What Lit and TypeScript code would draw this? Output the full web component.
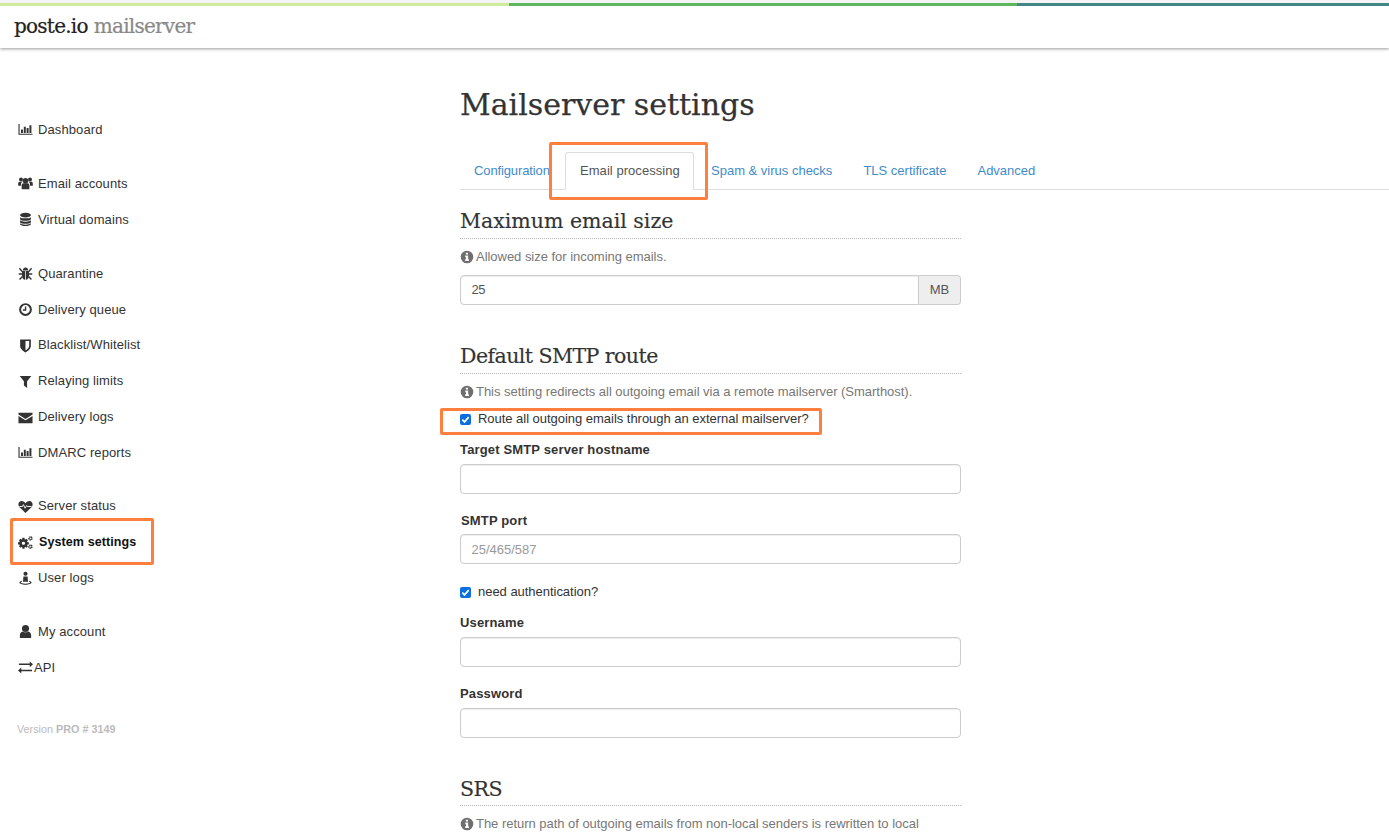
import { LitElement, html, css, svg } from "lit";
import { customElement } from "lit/decorators.js";

const I: Record<string, any> = {
  chart: svg`<path d="M.5 2h1.200v10.500H15.500v1.200H.5z"/><path d="M3.200 8h2.100v3.700H3.200zM6.200 5h2.100v6.700H6.200zM9.200 6.500h2.100v5.200H9.200zM12.200 3.500h2.100v8.200h-2.100z"/>`,
  users: svg`<circle cx="8" cy="5" r="3"/><circle cx="3.200" cy="3.800" r="2.100"/><circle cx="12.800" cy="3.800" r="2.100"/><path d="M3.900 14V9.800c0-1.100.9-2 2-2h4.200c1.100 0 2 .9 2 2V14z"/><path d="M.2 10.500V8c0-1.100.8-1.800 1.800-1.800h2.600c-.6.600-1.400 1.500-1.400 2.600v1.700zM15.800 10.500V8c0-1.100-.8-1.800-1.800-1.800h-2.600c.6.600 1.400 1.500 1.400 2.600v1.700z"/>`,
  db: svg`<ellipse cx="8" cy="3.300" rx="5.800" ry="2.500"/><path d="M2.200 5.500c1 1.700 10.600 1.700 11.600 0v2.200c-1 2.200-10.600 2.200-11.600 0zM2.200 8.800c1 2 10.600 2 11.600 0V11c-1 2.200-10.600 2.200-11.600 0zM2.200 12.100c1 2 10.600 2 11.600 0v.9c-.6 2.600-11 2.600-11.600 0z"/>`,
  bug: svg`<path d="M5.200 4.700C5.200 3 6.400 1.700 8 1.700s2.800 1.300 2.800 3z"/><path d="M4.300 5.400h3.300V14.600C5.600 14.400 4.300 12.600 4.300 10zM8.400 5.400h3.300V10c0 2.600-1.300 4.400-3.300 4.600z"/><path d="M1.500 2.500l3 3.300M14.500 2.500l-3 3.300M.8 8.500h3.700M15.200 8.500h-3.700M1.700 14.300l3-3M14.300 14.300l-3-3" stroke="currentColor" stroke-width="1.500" fill="none"/>`,
  clock: svg`<path fill-rule="evenodd" d="M8 1.200a6.800 6.800 0 1 0 0 13.600A6.800 6.800 0 0 0 8 1.200zm0 2.100a4.700 4.700 0 1 1 0 9.400 4.700 4.700 0 0 1 0-9.400z"/><path d="M7.300 4.800h1.500v4.400H5.200V7.800h2.100z"/>`,
  shield: svg`<path fill-rule="evenodd" d="M2.300 1.500h11.400v7c0 3.200-3.300 5.500-5.700 6.900-2.400-1.400-5.700-3.700-5.700-6.900zM8 3.300v9.900c1.900-1.200 3.900-2.800 3.900-4.800V3.300z"/>`,
  filter: svg`<path d="M1.800 2h12.400L9.700 7.600v7.200l-3.400-2.500V7.600z"/>`,
  mail: svg`<path d="M.5 3h15v1.800L8 9.500.5 4.800zM.5 6.300 8 11l7.500-4.700V14H.5z"/>`,
  heart: svg`<path d="M8 15 1.600 8.700C-.1 6.900 0 3.800 2.200 2.600 4.200 1.600 6.200 2.600 8 4.500c1.800-1.900 3.800-2.900 5.800-1.900 2.200 1.200 2.300 4.300.6 6.100z"/><path d="M1.500 8h3.300l1-2 1.800 3.800L9.300 7l.7 1h4.500" stroke="#fff" stroke-width="1" fill="none"/>`,
  cogs: svg`<g transform="translate(5.800 8.800)"><circle r="3.100" fill="none" stroke="currentColor" stroke-width="2.800"/><path d="M-1.200-5.800h2.400v2.400h-2.400zM-1.200 3.400h2.400v2.400h-2.400zM-5.800-1.200h2.400v2.400h-2.400zM3.400-1.200h2.400v2.400H3.400zM-4.900-3.200l1.700-1.700 1.700 1.700-1.700 1.700zM1.500-3.200l1.700-1.700 1.700 1.700-1.700 1.700zM-4.900 3.200l1.700-1.700 1.700 1.700-1.700 1.700zM1.500 3.200l1.700-1.700 1.700 1.700-1.700 1.700z"/></g><circle cx="13.300" cy="3.600" r="1.500" fill="none" stroke="currentColor" stroke-width="1.700" stroke-dasharray="1.300 .4"/><circle cx="13.300" cy="12.400" r="1.500" fill="none" stroke="currentColor" stroke-width="1.700" stroke-dasharray="1.300 .4"/>`,
  userlog: svg`<circle cx="8" cy="2.900" r="2.200"/><path d="M5.800 5.800h4.400l.5 5.700H5.300z"/><path fill-rule="evenodd" d="M4.500 10.300c-1.800.4-3 1.100-3 2 0 1.300 2.900 2.400 6.500 2.400s6.500-1.100 6.500-2.400c0-.9-1.200-1.600-3-2l.2 1c.8.300 1.300.7 1.300 1 0 .7-2.200 1.300-5 1.300s-5-.6-5-1.300c0-.3.500-.7 1.300-1z"/>`,
  user: svg`<circle cx="8" cy="4.800" r="3.800"/><path d="M2 15v-3c0-2.200 1.300-3.900 3.100-4.100.8.700 1.800 1 2.900 1s2.100-.3 2.900-1C12.700 8.100 14 9.800 14 12v3z"/>`,
  exch: svg`<path d="M1 3.700h11.500V1.500L16 4.600l-3.500 3V5.300H1zM15 10.300H3.500V8.100L0 11.300l3.500 3V12H15z"/>`,
  info: svg`<path fill-rule="evenodd" d="M8 .8a7.200 7.200 0 1 0 0 14.400A7.200 7.200 0 0 0 8 .8zM6.700 3h2.500v2.100H6.700zM6 6.400h3.300v4.300h.9v2H5.900v-2h1V8.300H6z"/>`,
};

const icon = (n: string) => html`<svg class="ic" viewBox="0 0 16 16" fill="currentColor">${I[n]}</svg>`;

type Item = { i: string; t: string; on?: boolean; api?: boolean };
const NAV: Item[][] = [
  [{ i: "chart", t: "Dashboard" }],
  [{ i: "users", t: "Email accounts" }, { i: "db", t: "Virtual domains" }],
  [
    { i: "bug", t: "Quarantine" },
    { i: "clock", t: "Delivery queue" },
    { i: "shield", t: "Blacklist/Whitelist" },
    { i: "filter", t: "Relaying limits" },
    { i: "mail", t: "Delivery logs" },
    { i: "chart", t: "DMARC reports" },
  ],
  [{ i: "heart", t: "Server status" }, { i: "cogs", t: "System settings", on: true }, { i: "userlog", t: "User logs" }],
  [{ i: "user", t: "My account" }, { i: "exch", t: "API", api: true }],
];

@customElement("app-root")
export class AppRoot extends LitElement {
  static styles = css`
    :host { display: block; height: 832px; overflow: hidden; background: #fff; position: relative;
      font-family: "Liberation Sans", Arial, sans-serif; font-size: 13px; color: #333; line-height: 20px; }
    .strip { display: grid; grid-template-columns: 509px 508px 1fr; height: 3px; border-top: 3px solid #f4f4f4; }
    .strip i:nth-child(1) { background: #cfec9c; }
    .strip i:nth-child(2) { background: #5cb75f; }
    .strip i:nth-child(3) { background: #428787; }
    header { height: 42px; box-sizing: border-box; padding: 0 0 2px 14px; box-shadow: 0 1px 3px rgba(0,0,0,.4); display: flex; align-items: center;
      font-family: "DejaVu Serif", serif; font-size: 20px; letter-spacing: -0.750px; color: #222; -webkit-text-stroke: .2px; }
    header span { color: #888; margin-left: 6px; }
    .main { display: grid; grid-template-columns: 460px 501px; }
    nav { padding: 64px 0 0 18px; }
    nav .grp { margin-bottom: 18px; }
    nav .grp:nth-child(3) { padding-top: .3px; margin-bottom: 17.500px; }
    nav .it { display: flex; align-items: center; height: 35.850px; gap: 5px; color: #333; font-size: 13px; letter-spacing: .1px; }
    nav .ic { width: 15px; height: 15px; flex: none; color: #333; }
    nav .it.on { font-weight: 700; color: #111; gap: 6px; font-size: 12.500px; }
    nav .it.api { gap: 1px; }
    .ver { font-size: 10.800px; color: #bbb; margin-top: 36px; margin-left: -1px; line-height: 14px; }
    .mark { position: absolute; border: 3px solid #ff7f3f; border-radius: 2px; box-sizing: border-box; }
    .m1 { left: 10px; top: 518px; width: 144px; height: 47px; }
    .m2 { left: 549px; top: 142px; width: 159px; height: 58px; }
    .m3 { left: 440px; top: 408px; width: 382px; height: 27px; }
    h1 { font-family: "DejaVu Serif", serif; font-weight: 400; font-size: 30px; color: #333; margin: 0; padding-top: 37px; line-height: 40px; -webkit-text-stroke: .25px; }
    .tabs { display: flex; width: 929px; border-bottom: 1px solid #ddd; margin-top: 27px; height: 37px; }
    .tabs a { display: block; color: #428bca; padding: 9px 15.500px 0; white-space: nowrap; box-sizing: border-box; height: 38px; }
    .tabs a.t1 { width: 105px; padding: 9px 0 0 14px; letter-spacing: -.12px; }
    .tabs a.act { color: #555; border: 1px solid #ddd; border-bottom-color: #fff; border-radius: 3px 3px 0 0; background: #fff; width: 129px; padding: 8px 14px 0; letter-spacing: .05px; }
    .tabs a.t3 { padding-left: 17px; }
    h2 { font-family: "DejaVu Serif", serif; font-weight: 400; font-size: 20.500px; color: #333; line-height: 26px; margin: 0; padding: 1px 0 4px; border-bottom: 1px dotted #bbb; -webkit-text-stroke: .15px; }
    h2.tight { letter-spacing: -0.550px; }
    h2.srs { padding-bottom: 3px; }
    .help { color: #777; display: flex; align-items: center; gap: 2px; line-height: 18px; white-space: nowrap; letter-spacing: -.03px; }
    .help .ic { width: 14px; height: 14px; color: #6f6f6f; flex: none; }
    .input { height: 30px; box-sizing: border-box; border: 1px solid #ccc; border-radius: 4px; box-shadow: inset 0 1px 1px rgba(0,0,0,.075); display: flex; align-items: center; padding: 0 10.500px; color: #555; background: #fff; }
    .group { display: flex; }
    .group .input { flex: 1; border-radius: 4px 0 0 4px; padding-bottom: 1px; letter-spacing: -.5px; }
    .addon { width: 42px; height: 30px; box-sizing: border-box; border: 1px solid #ccc; border-left: 0; border-radius: 0 4px 4px 0; background: #eee; color: #555; display: flex; align-items: center; justify-content: center; }
    .ph { color: #999; padding-top: 1px; }
    label { display: block; font-weight: 700; line-height: 18px; letter-spacing: .15px; }
    .in1 { padding-left: 1px; }
    .chk { display: flex; align-items: center; gap: 7px; line-height: 18px; letter-spacing: -.03px; }
    .box { width: 11px; height: 11px; background: #0b6fe0; border-radius: 2px; flex: none; display: flex; }
    .box svg { width: 11px; height: 11px; }
    .mt4 { margin-top: 4px; } .mt5 { margin-top: 5px; } .mt9 { margin-top: 9px; }
    .mt13 { margin-top: 13px; } .mt17 { margin-top: 17px; }
    .mt18 { margin-top: 18px; } .mt19 { margin-top: 19px; } .mt37 { margin-top: 37px; }
  `;

  render() {
    return html`
      <div class="strip"><i></i><i></i><i></i></div>
      <header>poste.io<span>mailserver</span></header>
      <div class="main">
        <nav>
          ${NAV.map((g) => html`<div class="grp">${g.map((x) => html`<div class="it ${x.on ? "on" : ""} ${x.api ? "api" : ""}">${icon(x.i)}${x.t}</div>`)}</div>`)}
          <div class="ver">Version <b>PRO # 3149</b></div>
        </nav>
        <section>
          <h1>Mailserver settings</h1>
          <div class="tabs">
            <a class="t1">Configuration</a><a class="act">Email processing</a><a class="t3">Spam &amp; virus checks</a><a>TLS certificate</a><a>Advanced</a>
          </div>
          <h2 class="mt17">Maximum email size</h2>
          <div class="help mt9">${icon("info")}Allowed size for incoming emails.</div>
          <div class="group mt9"><div class="input">25</div><div class="addon">MB</div></div>
          <h2 class="tight mt37">Default SMTP route</h2>
          <div class="help mt9">${icon("info")}This setting redirects all outgoing email via a remote mailserver (Smarthost).</div>
          <div class="chk mt9">${this.box()}Route all outgoing emails through an external mailserver?</div>
          <label class="mt13">Target SMTP server hostname</label>
          <div class="input mt5"></div>
          <label class="mt18 in1">SMTP port</label>
          <div class="input ph mt4">25/465/587</div>
          <div class="chk mt19">${this.box()}need authentication?</div>
          <label class="mt13">Username</label>
          <div class="input mt5"></div>
          <label class="mt18">Password</label>
          <div class="input mt5"></div>
          <h2 class="tight srs mt37">SRS</h2>
          <div class="help mt9">${icon("info")}The return path of outgoing emails from non-local senders is rewritten to local</div>
        </section>
      </div>
      <div class="mark m1"></div><div class="mark m2"></div><div class="mark m3"></div>
    `;
  }

  box() {
    return html`<span class="box"><svg viewBox="0 0 11 11"><path d="M2.300 5.600l2.200 2.300 4.200-4.800" stroke="#fff" stroke-width="1.700" fill="none"/></svg></span>`;
  }
}
